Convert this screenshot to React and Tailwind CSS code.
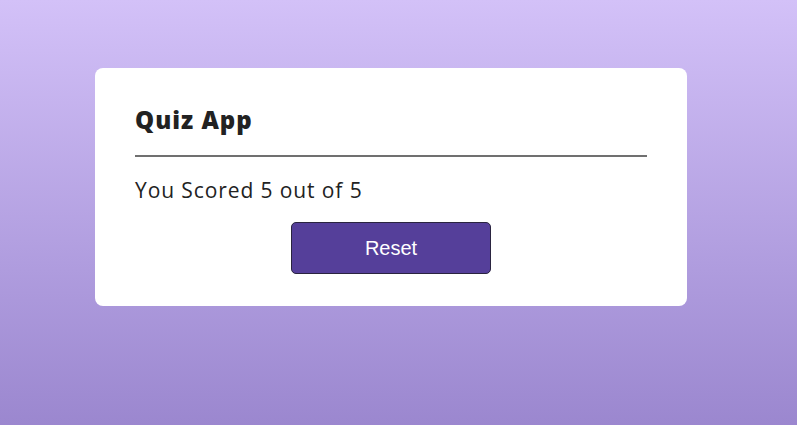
import React, { useState } from 'react';

// Quiz result card
function App() {
  const [score] = useState(5);
  const total = 5;

  return (
    <div className="min-h-[425px] w-full bg-gradient-to-b from-[#d3c1f8] to-[#9b87cf] pt-[68px]" style={{ fontFamily: '"Open Sans", Inter, sans-serif' }}>
      <div className="ml-[95px] w-[592px] rounded-lg bg-white px-10 pt-[34px] pb-[32px]">
        <h2 className="text-[24px] leading-[36px] font-extrabold tracking-[1px] text-[#222]">Quiz App</h2>
        <hr className="mt-[17px] h-[2px] border-0 bg-[#707070]" />
        <p className="mt-[18px] text-[21px] leading-[30px] tracking-[0.9px] text-[#222]">
          You Scored {score} out of {total}
        </p>
        <div className="mt-[17px] flex justify-center">
          <button
            className="h-[52px] w-[200px] rounded-[5px] border border-[#2a2440] bg-[#553f9a] text-[20px] text-white"
            style={{ fontFamily: '"Liberation Sans", Arial, sans-serif' }}
          >
            Reset
          </button>
        </div>
      </div>
    </div>
  );
}

export default App;
